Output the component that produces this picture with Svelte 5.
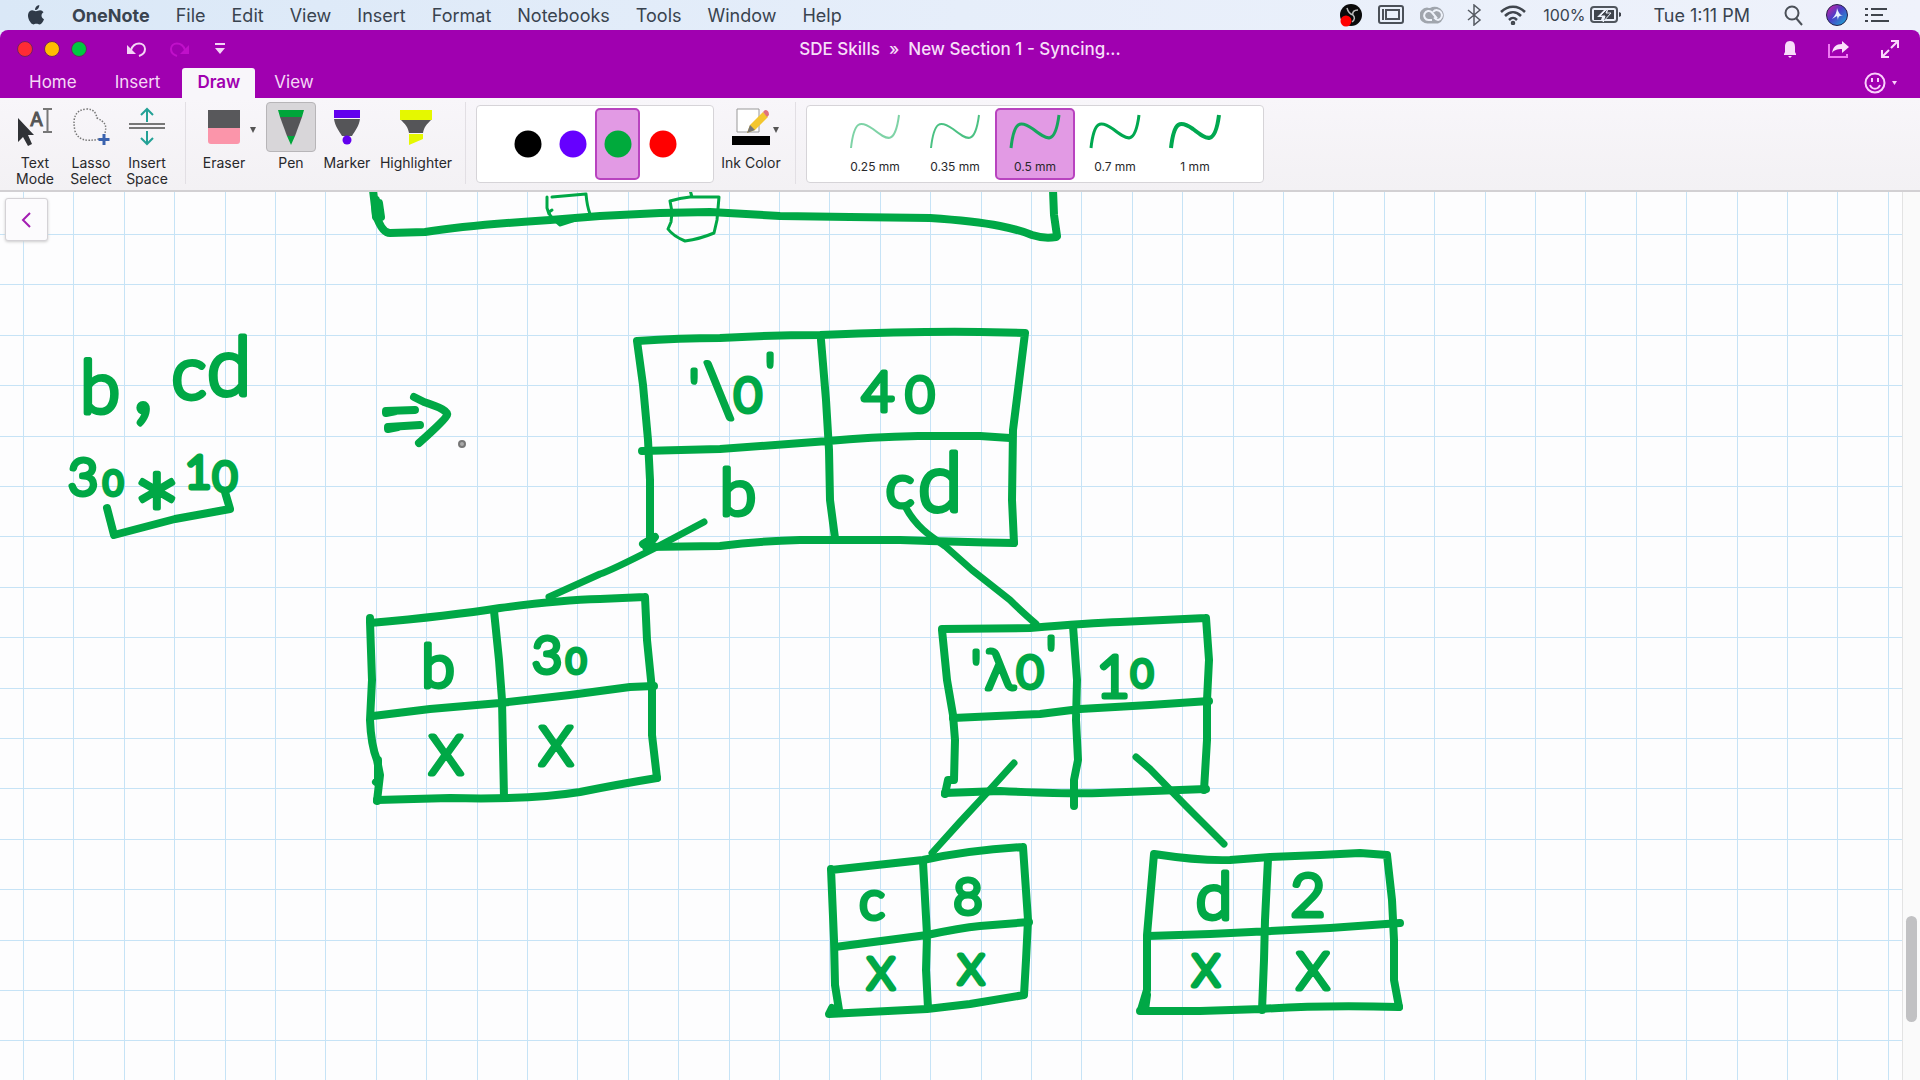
<script>
  const menus = ['File', 'Edit', 'View', 'Insert', 'Format', 'Notebooks', 'Tools', 'Window', 'Help'];
  const tabs = ['Home', 'Insert', 'Draw', 'View'];
  const inks = [
    { name: 'Black', color: '#000000' },
    { name: 'Purple', color: '#6600ff' },
    { name: 'Green', color: '#00aa3c' },
    { name: 'Red', color: '#ff0000' }
  ];
  const widths = [
    { label: '0.25 mm', w: 2, o: 0.5 },
    { label: '0.35 mm', w: 2, o: 0.7 },
    { label: '0.5 mm', w: 3, o: 0.9 },
    { label: '0.7 mm', w: 3, o: 1 },
    { label: '1 mm', w: 4, o: 1 }
  ];
  let tab = $state('Draw');
  let tool = $state('Pen');
  let ink = $state('Green');
  let width = $state('0.5 mm');

  // Grid rules of the page, about 50px apart
  const columns = Array.from({ length: 76 }, (_, i) => 23 + Math.round((i * 504) / 10));
  const rows = Array.from({ length: 44 }, (_, i) => 234 + Math.round((i * 504) / 10));

  const thick = [
    'M373 190L376 215Q382 233 390 233L425 232Q470 225 550 220L600 216L660 213L710 212L780 216L850 217L930 218Q975 221 1000 226Q1020 230 1032 235Q1044 239 1056 237M1053 190L1054 215L1057 236',
    'M376 200L379 215L376 217L375 203M379 203L381 217',
    'M107 508L114 535Q145 527 175 519L230 509L225 492',
    'M386 411L415 410M388 427L420 425M386 413L396 411M388 429L398 427M414 397L424 402Q449 410 447 415Q446 419 419 443',
    // root node
    'M637 341Q680 338 720 338Q770 335 820 335Q920 331 980 332L1025 333M637 341L643 385L648 440L650 480L650 540M1025 333L1018 390L1013 430L1012 500L1014 543',
    'M642 451L720 449L828 441Q870 437 918 436L980 436L1010 438M821 340L826 400L829 450L830 500L835 538M646 547L720 546Q760 541 800 540L900 540Q960 542 1014 543M643 544L655 537L650 543',
    // left leaf
    'M370 618L370 623Q450 616 500 608Q560 600 600 599L645 597M370 622L372 680L370 720Q371 745 377 760L380 775L377 801M645 597L647 640L652 690L652 735L657 778',
    'M377 800L450 798Q530 800 580 792Q620 784 657 778M373 716L430 709L500 703L570 695L630 687L654 686M494 611L499 660L502 700L503 750L504 797M378 760L378 780L376 782',
    // right branch
    'M942 629L1030 628Q1090 623 1120 622L1206 618M942 630L947 680L953 715L955 740L954 780L948 780L945 794M1206 618L1209 660L1207 700L1207 740L1204 790',
    'M945 793L1000 791Q1070 794 1100 793L1206 789M953 718L1040 714L1080 709L1150 705L1209 701M1073 626L1077 680L1076 720L1078 760L1074 780L1074 806',
    // c leaf
    'M831 870L923 860Q970 850 1023 847M831 869L834 940L835 985L839 1010M1023 847L1028 920L1026 960L1024 995L970 1004L927 1009L829 1014L832 1008',
    'M835 947L927 935Q960 928 980 926L1029 922M923 862L927 935L926 970L928 1008',
    // d leaf
    'M1154 854Q1200 861 1230 860L1270 857L1320 855L1360 853L1387 855M1154 854L1150 900L1147 935L1147 990L1141 1010M1387 855L1392 900L1394 940L1394 980L1399 1007',
    'M1140 1011L1200 1011L1262 1009Q1320 1005 1399 1007M1148 936L1210 934Q1270 931 1330 928L1400 923M1268 859L1265 920L1264 960L1262 1010M1147 995L1145 1010'
  ];
  const links = [
    'M704 522L655 548Q610 571 600 574L549 597',
    'M905 506C915 526 930 536 945 546L972 570L1010 600Q1020 610 1036 624',
    'M1014 763L985 795L960 822L932 853',
    'M1136 757L1150 769L1185 805L1224 844'
  ];
  const thin = [
    'M552 197L586 194Q587 206 590 214Q575 221 560 225Q549 216 549 212L552 210M547 197L547 208L549 214',
    'M670 201Q680 198 690 197L719 197L717 220L714 233Q700 239 685 241Q673 236 668 229L671 222L672 212L670 201M690 190L692 197'
  ];
  // Words on the page; each character has its centre, baseline and size
  const notes = [
    [['b', 100, 413, 72], [',', 143, 412, 96]],
    [['c', 189, 399, 74], ['d', 229, 395, 80]],
    [['3', 83, 495, 52], ['0', 113, 495, 34]],
    [['*', 157, 560, 116]],
    [['1', 198, 488, 46], ['0', 225, 491, 42]],
    [["'", 694, 406, 52], ['\\', 719, 416, 72], ['0', 748, 412, 48], ["'", 770, 390, 52]],
    [['4', 878, 411, 56], ['0', 920, 412, 50]],
    [['b', 738, 515, 66]],
    [['c', 900, 507, 60], ['d', 940, 511, 80]],
    [['b', 438, 687, 60]],
    [['3', 547, 673, 52], ['0', 576, 673, 34]],
    [['X', 446, 774, 54]],
    [['X', 556, 765, 54]],
    [["'", 976, 687, 52], ['λ', 1000, 689, 56], ['0', 1030, 688, 46], ["'", 1051, 673, 52]],
    [['1', 1113, 697, 58], ['0', 1142, 687, 38]],
    [['c', 872, 919, 54]],
    [['8', 968, 914, 50]],
    [['X', 881, 989, 44]],
    [['X', 971, 984, 42]],
    [['d', 1214, 919, 66]],
    [['2', 1308, 916, 60]],
    [['X', 1206, 986, 44]],
    [['X', 1313, 989, 52]]
  ];
</script>

<div class="screen">
  <header class="menubar">
    <nav class="menus" aria-label="Application menu">
      <button aria-label="System" class="apple"><svg width="18" height="22" viewBox="0 0 18 22"><path fill="#2f3a48" d="M12.3 1c.1 1.500-.5 2.800-1.300 3.700-.8.9-1.900 1.400-2.900 1.300-.2-1.400.5-2.700 1.200-3.500C10.100 1.600 11.300 1.100 12.300 1zM16.500 8.200c-1.300.8-2 2-2 3.400 0 1.700 1 3 2.500 3.600-.4 1.200-1 2.300-1.700 3.300-.9 1.300-1.700 1.900-2.800 1.900-1.200 0-1.600-.7-3.100-.7s-2 .7-3.100.7c-1.200 0-2.100-1-3-2.300C1.500 15.500.6 12.500 1.100 10.200 1.600 7.600 3.400 6.300 5.200 6.300c1.400 0 2.500.9 3.700.9 1.100 0 2.500-1 4.200-1 1.400.1 2.600.7 3.400 2z"/></svg></button>
      <button class="app">OneNote</button>
      {#each menus as m}<button>{m}</button>{/each}
    </nav>
    <div class="status">
      <svg width="22" height="24" viewBox="0 0 22 24"><circle cx="11" cy="12" r="11" fill="#0a0a0a"/><path d="M7 5c1 4 3 6 6 7M18 7c-4 0-6 2-5 5 2 2 2 5-1 7" fill="none" stroke="#bbb" stroke-width="1.500"/><circle cx="6" cy="18" r="5.500" fill="#f00"/></svg>
      <svg width="26" height="20" viewBox="0 0 26 20" fill="none" stroke="#4b5058"><rect x="1" y="1" width="24" height="17" rx="2" stroke-width="2"/><rect x="8" y="5" width="13" height="9" stroke-width="2"/><path d="M5 4v11" stroke-width="2"/></svg>
      <svg width="28" height="20" viewBox="0 0 28 20"><path d="M8 18.500a8 8 0 0 1-1-16Q9 3 10 3A9 8.700 0 1 1 18 18.500z" fill="#a0a5ad"/><g fill="none" stroke="#eef2fa" stroke-width="2"><path d="M12 15H8.500a4.500 4.500 0 1 1 3.500-7.500l5 6"/><path d="M13 7a5 5 0 1 1 5 8q-2 0-4-2.500"/></g></svg>
      <svg class="bt" width="16" height="22" viewBox="0 0 16 22" fill="none" stroke="#555a62" stroke-width="1.500"><path d="M2 6l12 10-6 5V1l6 5L2 16"/></svg>
      <svg width="28" height="20" viewBox="0 0 28 20" fill="none" stroke="#40454d" stroke-width="2.500"><path d="M2 7c7-7 17-7 24 0M6 11c5-5 11-5 16 0M10 15c3-3 5-3 8 0"/><circle cx="14" cy="18" r="1" /></svg>
      <span class="battery">100%<svg width="32" height="18" viewBox="0 0 32 18"><rect x="1" y="1" width="26" height="15" rx="3" fill="none" stroke="#50555d" stroke-width="2"/><path d="M4 4h10l-7 7h5l-1 3H4zM18 4h6v9H15l6-6h-4z" fill="#40454d"/><path d="M29 6v5l2-1V7z" fill="#40454d"/><path d="M18 2l-8 8h5l-2 6 8-9h-5z" fill="#40454d" stroke="#eef2fa"/></svg></span>
      <time>Tue 1:11 PM</time>
      <svg class="search" width="20" height="22" viewBox="0 0 20 22" fill="none" stroke="#4b5058" stroke-width="2"><circle cx="8" cy="9" r="6.500"/><path d="M12 14l6 7"/></svg>
      <svg width="22" height="22" viewBox="0 0 22 22"><defs><linearGradient id="siri" x2="1" y2="1"><stop stop-color="#e01c9c"/><stop offset=".45" stop-color="#4b3dc8"/><stop offset="1" stop-color="#16b9d4"/></linearGradient></defs><circle cx="11" cy="11" r="10.500" fill="url(#siri)" stroke="#25204a"/><path d="M11 4c1 4 3 7 6 8-3-1-5 0-5 4l-1-4-5 3c3-3 5-7 5-11z" fill="#e8f3ff"/></svg>
      <svg width="26" height="18" viewBox="0 0 26 18" stroke="#40454d" stroke-width="2" fill="none"><path d="M1 3h3M1 9h3M1 15h3M7 3h16M7 9h12M7 15h18"/></svg>
    </div>
  </header>

  <div class="window">
    <div class="titlebar">
      <div class="left">
        <button class="light red" aria-label="Close"></button>
        <button class="light yellow" aria-label="Minimize"></button>
        <button class="light green" aria-label="Zoom"></button>
        <button class="undo" aria-label="Undo"><svg width="21" height="18" viewBox="0 0 21 18" fill="none" stroke="#f3d5f5" stroke-width="2"><path d="M5 10c3-9 14-8 14-1 0 4-3 6-6 7"/><path d="M1 5v9h9z" fill="#f3d5f5" stroke="none"/></svg></button>
        <button class="redo" aria-label="Redo"><svg width="21" height="18" viewBox="0 0 21 18" fill="none" stroke="#c010ca" stroke-width="2"><path d="M16 10C13 1 2 2 2 9c0 4 3 6 6 7"/><path d="M20 5v9h-9z" fill="#c010ca" stroke="none"/></svg></button>
        <button class="more" aria-label="Customize toolbar"><svg width="10" height="12" viewBox="0 0 10 12" fill="#f3d5f5"><path d="M0 0h10v2H0zM0 5h10l-5 6z"/></svg></button>
      </div>
      <h1>SDE Skills &nbsp;» &nbsp;New Section 1 - Syncing...</h1>
      <div class="right">
        <button aria-label="Notifications"><svg width="14" height="18" viewBox="0 0 14 18" fill="#f9dcfa"><path d="M7 1c4 0 5 3 5 6v5l1 2v1H1v-1l1-2V7c0-3 1-6 5-6zM5 16h4l-2 2z"/></svg></button>
        <button aria-label="Share"><svg width="22" height="18" viewBox="0 0 22 18"><path d="M1 4v13h18v-3" fill="none" stroke="#f078f3" stroke-width="2"/><path d="M4 13c1-6 4-9 10-9V1l7 6-7 6V9c-5 0-8 1-10 4z" fill="#fbe0fb"/></svg></button>
        <button aria-label="Full screen"><svg width="18" height="18" viewBox="0 0 18 18" stroke="#fbd8fc" stroke-width="2" fill="none"><path d="M10 1h7v7M17 1l-7 7M1 10v7h7M1 17l7-7"/></svg></button>
      </div>
    </div>
    <div class="tabrow">
      <div class="tabs" role="tablist">
        {#each tabs as t}<button role="tab" aria-selected={tab === t} class:active={tab === t} onclick={() => (tab = t)}>{t}</button>{/each}
      </div>
      <button class="smile" aria-label="Feedback"><svg width="34" height="24" viewBox="0 0 34 24" fill="none" stroke="#fbd0fc" stroke-width="2"><circle cx="11" cy="12" r="9.500"/><path d="M8 7v4M14 7v4M6 14c2 5 8 5 10 0"/><path d="M28 10h5l-2.500 4z" fill="#fbd0fc" stroke="none"/></svg></button>
    </div>

    <div class="ribbon">
      <div class="group first">
        <button class="tool"><span class="icon"><svg width="40" height="40" viewBox="0 0 40 40"><path d="M3 11v24l5-5 5 9 4-2-4-9h6z" fill="#303236"/><path d="M28 2h9M28 25h9M32.500 2v23" stroke="#777" stroke-width="2"/><text x="15" y="19" font-size="19" fill="#555" stroke="#555">A</text></svg></span>Text<br />Mode</button>
        <button class="tool"><span class="icon"><svg width="40" height="40" viewBox="0 0 40 40" fill="none"><path d="M28 32C15 35 7 33 4 24C1 10 5 3 15 2C24 2 25 7 26 11C34 15 36 18 34 26" stroke="#777" stroke-width="1.500" stroke-dasharray="1.500 1.500"/><path d="M33 27v11M27.500 32.500h11" stroke="#3a62ae" stroke-width="3"/></svg></span>Lasso<br />Select</button>
        <button class="tool"><span class="icon"><svg width="40" height="40" viewBox="0 0 40 40" fill="none"><path d="M2 17h36M2 21h36" stroke="#777" stroke-width="2"/><path d="M20 15V2M14 8l6-6 6 6M20 24v13M14 31l6 6 6-6" stroke="#23a196" stroke-width="2"/></svg></span>Insert<br />Space</button>
      </div>
      <div class="group pens">
        <button class="tool eraser"><span class="icon"><svg width="34" height="40" viewBox="0 0 34 40"><path d="M1 3h32v18H1z" fill="#58585b"/><path d="M1 21h32v13q0 3-3 3H4q-3 0-3-3z" fill="#fb95aa"/></svg></span>Eraser</button>
        <button class="caret" aria-label="Eraser options"><svg width="6" height="6" viewBox="0 0 6 6"><path d="M0 0h6L3 6z" fill="#555"/></svg></button>
        <button class="tool pen" class:picked={tool === 'Pen'} onclick={() => (tool = 'Pen')}><span class="icon"><svg width="28" height="40" viewBox="0 0 28 40"><path d="M3 10h22l-7 19h-8z" fill="#555558"/><path d="M1 3h26l-2 7H3zM10 29h8l-4 9z" fill="#00a63a"/></svg></span>Pen</button>
        <button class="tool marker" class:picked={tool === 'Marker'} onclick={() => (tool = 'Marker')}><span class="icon"><svg width="28" height="40" viewBox="0 0 28 40"><path d="M1 12h26c-1 7-5 12-8 17H9C6 24 2 19 1 12z" fill="#555558"/><path d="M1 3h26v8H1z" fill="#6200ee"/><circle cx="14" cy="33" r="4.500" fill="#6200ee"/></svg></span>Marker</button>
        <button class="tool highlighter" class:picked={tool === 'Highlighter'} onclick={() => (tool = 'Highlighter')}><span class="icon"><svg width="34" height="40" viewBox="0 0 34 40"><path d="M2 13h30c-4 4-7 7-8 13H10C9 20 6 17 2 13z" fill="#555558"/><path d="M1 3h32v10H1zM10 27h14v5l-14 6z" fill="#e5f800"/></svg></span>Highlighter</button>
      </div>
      <div class="group">
        <div class="gallery colors">
          {#each inks as c}
            <button aria-label={c.name} class:chosen={ink === c.name} onclick={() => (ink = c.name)}><svg width="28" height="28" viewBox="0 0 28 28"><circle cx="14" cy="14" r="13.500" fill={c.color}/></svg></button>
          {/each}
        </div>
        <button class="tool inkcolor"><span class="icon"><svg width="38" height="40" viewBox="0 0 38 40"><path d="M5 2h22v23H5z" fill="#fff" stroke="#999"/><path d="M0 29h38v9H0z" fill="#000"/><path d="M15 26l3-8L31 5l5 5-13 13z" fill="#f3c62e"/><path d="M31 5l2-2q4 0 4 5l-2 2z" fill="#e0717b"/><path d="M15 26l3-8 5 5z" fill="#777"/></svg></span>Ink Color</button>
        <button class="caret ink-caret" aria-label="Ink color options"><svg width="6" height="6" viewBox="0 0 6 6"><path d="M0 0h6L3 6z" fill="#555"/></svg></button>
      </div>
      <div class="group last">
        <div class="gallery strokes">
          {#each widths as s}
            <button class:chosen={width === s.label} onclick={() => (width = s.label)}>
              <svg width="56" height="42" viewBox="0 0 56 42" fill="none" stroke="#00a850" stroke-width={s.w} opacity={s.o}><path d="M4 37C7 10 13 9 26 18C40 29 48 35 52 4"/></svg>
              {s.label}
            </button>
          {/each}
        </div>
      </div>
    </div>

    <main class="page">
      <svg class="canvas" aria-label="Notebook page">
        <g transform="translate(0 -192)">
          <g stroke="#c6e3f6" stroke-width="1" shape-rendering="crispEdges">
            {#each columns as x}<line x1={x} x2={x} y1="192" y2="2400" />{/each}
            {#each rows as y}<line x1="0" x2="3840" y1={y} y2={y} />{/each}
          </g>
          <g class="ink">
            <g stroke-width="8">{#each thick as d}<path {d} />{/each}</g>
            <g stroke-width="7">{#each links as d}<path {d} />{/each}</g>
            <g stroke-width="3">{#each thin as d}<path {d} />{/each}</g>
            {#each notes as word}<text>{#each word as [t, x, y, s]}<tspan {x} {y} font-size={s}>{t}</tspan>{/each}</text>{/each}
          </g>
          <circle cx="462" cy="444" r="3" fill="#aaa" stroke="#777" stroke-width="2" />
        </g>
      </svg>
      <button class="back" aria-label="Show pages"><svg width="12" height="18" viewBox="0 0 12 18" fill="none" stroke="#a31db2" stroke-width="2"><path d="M9 2L2 9l7 7"/></svg></button>
      <div class="scroll"><div class="thumb"></div></div>
    </main>
  </div>
</div>

<style>
  :global(body) { margin: 0; background: #e4edf8; }
  .screen { font-family: Inter, "Liberation Sans", sans-serif; height: 100vh; display: flex; flex-direction: column; overflow: hidden; color: #222; }
  button { font: inherit; color: inherit; background: none; border: 0; padding: 0; margin: 0; }
  svg { display: block; flex: none; }
  .menubar { height: 30px; flex: none; display: flex; align-items: center; justify-content: space-between; background: linear-gradient(90deg, #dae8f7, #e6eefa 50%, #eff2fb); color: #39434f; font-size: 18px; padding: 0 30px 0 27px; white-space: nowrap; }
  .menus { display: flex; align-items: center; gap: 26px; }
  .app { font-weight: 700; }
  .apple { width: 19px; }
  .status { display: flex; align-items: center; gap: 16px; }
  .bt { margin: 0 1px 0 2px; }
  .battery { display: flex; align-items: center; gap: 4px; font-size: 16px; }
  .search { margin-right: 6px; }
  time { margin: 0 18px 0 16px; }
  .window { flex: 1; min-height: 0; display: flex; flex-direction: column; background: #a000b0; border-radius: 8px 8px 0 0; overflow: hidden; }
  .titlebar { height: 38px; flex: none; display: grid; grid-template-columns: 1fr auto 1fr; align-items: center; }
  .left { display: flex; align-items: center; padding-left: 17px; }
  .light { width: 16px; height: 16px; border-radius: 50%; margin-right: 11px; border: 1px solid #722064; }
  .red { background: #ff2b35; }
  .yellow { background: #ffbd00; }
  .green { background: #00c840; }
  .undo { margin-left: 28px; }
  .redo { margin: 0 25px 0 22px; }
  h1 { margin: 0; font-size: 17px; font-weight: 500; color: #f7dff8; white-space: nowrap; }
  .right { display: flex; justify-content: flex-end; align-items: center; gap: 31px; padding-right: 21px; }
  .tabrow { height: 30px; flex: none; display: flex; justify-content: space-between; align-items: stretch; padding-right: 22px; }
  .tabs { display: flex; color: #f5d8f6; font-size: 17px; padding-left: 10px; }
  .tabs button { padding: 0 19px 2px; border-radius: 3px 3px 0 0; }
  .tabs .active { background: #f8f6fa; color: #a000b0; font-weight: 600; padding: 0 15px 2px; margin: 0 0 0 3px; }
  .ribbon { height: 94px; flex: none; box-sizing: border-box; background: linear-gradient(#f8f6fa, #f3f1f4); border-bottom: 2px solid #d2d0d3; display: flex; padding: 4px 0 6px 7px; font-size: 14px; line-height: 16px; color: #28282b; }
  .group { display: flex; align-items: flex-start; border-right: 1px solid #e2dfe4; padding: 0 10px; }
  .group.first { padding: 0 10px 0 0; }
  .group.last { border: 0; padding: 0 10px; }
  .group.pens { padding: 0 7px 0 12px; }
  .tool { display: flex; flex-direction: column; align-items: center; width: 56px; white-space: nowrap; }
  .icon { display: flex; align-items: center; justify-content: center; height: 48px; width: 48px; margin-bottom: 3px; border: 1px solid transparent; border-radius: 4px; }
  .eraser { width: 52px; }
  .picked .icon { background: #d8d6d9; border-color: #b7b5b8; }
  .caret { margin-top: 25px; }
  .pen { width: 70px; }
  .marker { width: 42px; }
  .highlighter { width: 84px; margin-left: 6px; }
  .gallery { display: flex; justify-content: center; box-sizing: border-box; height: 78px; margin-top: 3px; padding: 2px 0; background: #fff; border: 1px solid #d6d4d8; border-radius: 4px; }
  .gallery button { border: 2px solid transparent; border-radius: 5px; display: flex; flex-direction: column; align-items: center; }
  .gallery .chosen { background: #e29ae4; border-color: #b843bf; }
  .colors { width: 238px; }
  .colors button { width: 45px; box-sizing: border-box; justify-content: center; }
  .inkcolor { width: 68px; margin-left: 3px; }
  .ink-caret { margin-left: -12px; margin-right: 6px; }
  .strokes { width: 458px; }
  .strokes button { width: 80px; box-sizing: border-box; font-size: 12px; padding-top: 1px; gap: 6px; }
  .page { flex: 1; min-height: 0; position: relative; background: #fdfdfe; display: flex; }
  .canvas { flex: 1; min-width: 0; height: 100%; overflow: hidden; }
  .ink { fill: none; stroke: #00a846; stroke-linecap: round; stroke-linejoin: round; }
  .ink text { font-family: Lato, "Open Sans", sans-serif; font-weight: 300; text-anchor: middle; fill: #00a846; stroke-width: 5px; }
  .back { position: absolute; left: 5px; top: 6px; width: 43px; height: 43px; display: flex; align-items: center; justify-content: center; background: #fcfbfd; border: 1px solid #d4d2d6; border-radius: 3px; box-shadow: 0 1px 3px #ccc; }
  .scroll { width: 18px; box-sizing: border-box; background: #fafafa; border-left: 1px solid #e3e3e3; display: flex; flex-direction: column; justify-content: flex-end; align-items: center; padding-bottom: 58px; }
  .thumb { width: 11px; height: 106px; border-radius: 6px; background: #c1c1c3; }
</style>
